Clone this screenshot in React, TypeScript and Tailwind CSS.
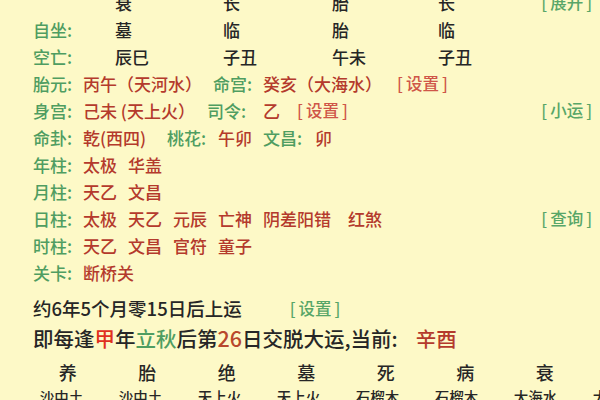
const GREEN = 'text-[#4f9d61]';
const RED = 'text-[#b43a2c]';
const DARK = 'text-[#262626]';

function Tag({ label, tone }: { label: string; tone: 'green' | 'red' }) {
  return (
    <span
      className={`${tone === 'green' ? 'text-[#58a668]' : 'text-[#cf5648]'} flex items-center text-[16.5px] whitespace-nowrap`}
    >
      <span>[</span>
      <span className="mx-[3px]">{label}</span>
      <span>]</span>
    </span>
  );
}

const tableRows = [
  { label: '', cells: ['衰', '长', '胎', '长'], tag: '展开' },
  { label: '自坐:', cells: ['墓', '临', '胎', '临'] },
  { label: '空亡:', cells: ['辰巳', '子丑', '午未', '子丑'] },
];

const stages = ['养', '胎', '绝', '墓', '死', '病', '衰'];
const nayin = ['沙中土', '沙中土', '天上火', '天上火', '石榴木', '石榴木', '大海水', '大海水'];

function Label({ children }: { children: string }) {
  return <span className={`${GREEN} w-[50px] shrink-0`}>{children}</span>;
}

function Row({ children, right }: { children: React.ReactNode; right?: React.ReactNode }) {
  return (
    <div className="flex h-[27px] items-center pl-[33px] pr-[8px] whitespace-nowrap">
      <div className="flex flex-1 items-center">{children}</div>
      {right}
    </div>
  );
}

function Words({ items, wide }: { items: string[]; wide?: boolean }) {
  return (
    <div className={`flex items-center gap-[11px] ${RED}`}>
      {items.map((w, i) => (
        <span key={i} className={wide && i === items.length - 1 ? 'ml-[6px]' : ''}>
          {w}
        </span>
      ))}
    </div>
  );
}

export default function App() {
  return (
    <div
      className="h-[400px] w-[600px] overflow-hidden bg-[#fdf9c7] text-[17px] font-medium leading-none"
      style={{ fontFamily: '"Noto Sans CJK SC", "Noto Sans", sans-serif' }}
    >
      <div className="-mt-[11px]">
        {tableRows.map((r, i) => (
          <div
            key={i}
            className="grid h-[27px] grid-cols-[82px_108px_109px_106px_80px_1fr] items-center pl-[33px] pr-[8px]"
          >
            <span className={GREEN}>{r.label}</span>
            {r.cells.map((c, j) => (
              <span key={j} className={DARK}>
                {c}
              </span>
            ))}
            <div className="flex justify-end">{r.tag && <Tag label={r.tag} tone="green" />}</div>
          </div>
        ))}

        <Row>
          <Label>胎元:</Label>
          <span className={`${RED} w-[130px] shrink-0`}>丙午（天河水）</span>
          <span className={`${GREEN} w-[50px] shrink-0`}>命宫:</span>
          <span className={`${RED} w-[134px] shrink-0`}>癸亥（大海水）</span>
          <Tag label="设置" tone="red" />
        </Row>

        <Row right={<Tag label="小运" tone="green" />}>
          <Label>身宫:</Label>
          <span className={`${RED} w-[124px] shrink-0`}>己未 (天上火）</span>
          <span className={`${GREEN} w-[56px] shrink-0`}>司令:</span>
          <span className={`${RED} w-[34px] shrink-0`}>乙</span>
          <Tag label="设置" tone="red" />
        </Row>

        <Row>
          <Label>命卦:</Label>
          <span className={`${RED} w-[84px] shrink-0`}>乾(西四)</span>
          <span className={`${GREEN} w-[51px] shrink-0`}>桃花:</span>
          <span className={`${RED} w-[45px] shrink-0`}>午卯</span>
          <span className={`${GREEN} w-[52px] shrink-0`}>文昌:</span>
          <span className={RED}>卯</span>
        </Row>

        <Row>
          <Label>年柱:</Label>
          <Words items={['太极', '华盖']} />
        </Row>
        <Row>
          <Label>月柱:</Label>
          <Words items={['天乙', '文昌']} />
        </Row>
        <Row right={<Tag label="查询" tone="green" />}>
          <Label>日柱:</Label>
          <Words items={['太极', '天乙', '元辰', '亡神', '阴差阳错', '红煞']} wide />
        </Row>
        <Row>
          <Label>时柱:</Label>
          <Words items={['天乙', '文昌', '官符', '童子']} />
        </Row>
        <Row>
          <Label>关卡:</Label>
          <Words items={['断桥关']} />
        </Row>

        <div className={`mt-[7px] flex h-[30px] items-center pl-[33px] text-[18.5px] ${DARK} whitespace-nowrap`}>
          <span>约6年5个月零15日后上运</span>
          <span className="ml-[48px]">
            <Tag label="设置" tone="green" />
          </span>
        </div>

        <div className={`flex h-[30px] items-center pl-[33px] text-[20.5px] ${DARK} whitespace-nowrap`}>
          即每逢<span className="text-[#e0301f]">甲</span>年<span className={GREEN}>立秋</span>后第
          <span className="text-[#b8482c] text-[21.5px]">26</span>日交脱大运,当前:
          <span className={`${RED} ml-[18px]`}>辛酉</span>
        </div>

        <div className={`mt-[6px] grid h-[26px] grid-cols-[repeat(7,79.5px)] items-center pl-[28px] text-[18px] ${DARK}`}>
          {stages.map((s, i) => (
            <span key={i} className="text-center">
              {s}
            </span>
          ))}
        </div>

        <div className={`grid h-[24px] grid-cols-[repeat(8,79px)] items-center pl-[22px] text-[14.5px] ${DARK}`}>
          {nayin.map((s, i) => (
            <span key={i} className="text-center whitespace-nowrap">
              {s}
            </span>
          ))}
        </div>
      </div>
    </div>
  );
}
